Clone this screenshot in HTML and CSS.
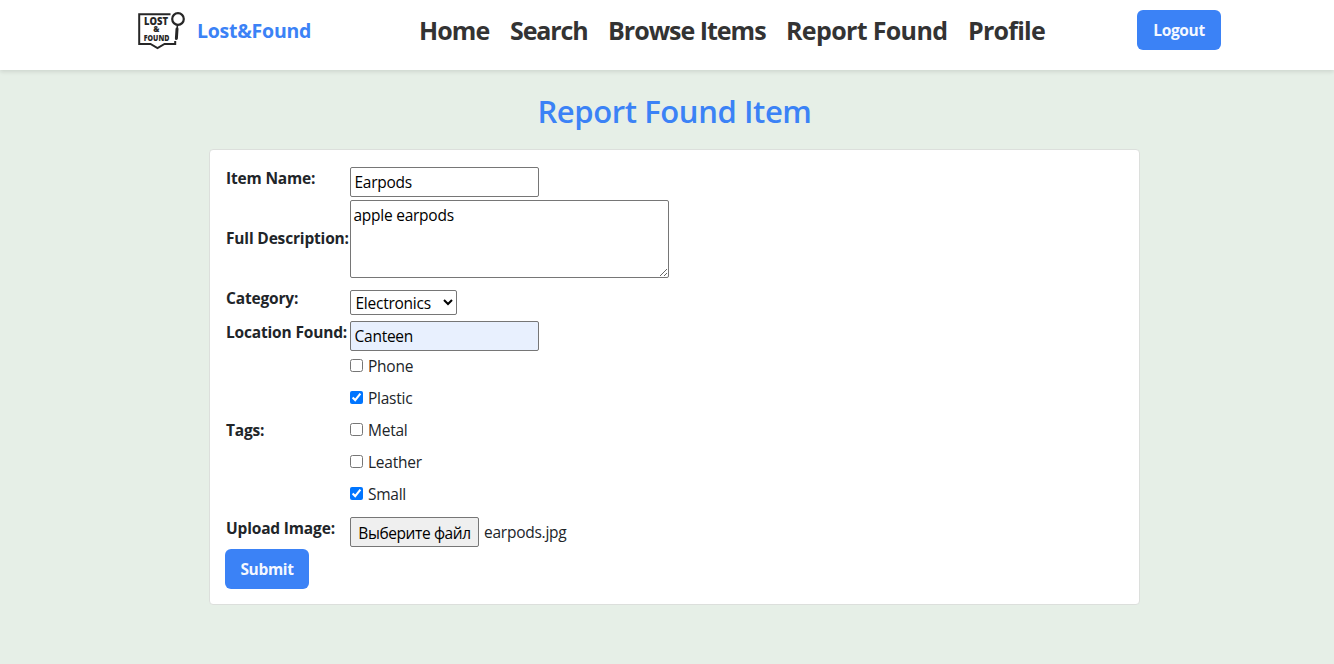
FILE: index.html
```
<!DOCTYPE html>
<html lang="en">
<head>
<meta charset="utf-8">
<title>Report Found Item</title>
<link rel="stylesheet" href="styles.css">
</head>
<body>
<header class="header">
  <a class="brand">
    <svg class="logo" width="50" height="40" viewBox="0 0 50 40" fill="none" stroke="#272727">
      <path d="M33.5 4.2H2.2V34H13.5L20.5 38L27.5 34H38.2V31" stroke-width="2"/>
      <circle cx="41" cy="9" r="5.8" stroke-width="2.2"/>
      <path d="M40.3 15V19" stroke-width="1.6"/>
      <path d="M40 19L39.4 28.5" stroke-width="3" stroke-linecap="round"/>
      <g class="logo-text" fill="#272727" stroke="none">
        <text x="7" y="14.6" font-size="10.2" textLength="24" lengthAdjust="spacingAndGlyphs">LOST</text>
        <text x="16.3" y="22.4" font-size="8.2" textLength="6.2" lengthAdjust="spacingAndGlyphs">&amp;</text>
        <text x="6.8" y="30.6" font-size="8.8" textLength="25.5" lengthAdjust="spacingAndGlyphs">FOUND</text>
      </g>
    </svg>
    <span class="brand-name">Lost&amp;Found</span>
  </a>
  <nav class="nav">
    <a class="nav-home">Home</a>
    <a class="nav-search">Search</a>
    <a class="nav-browse">Browse Items</a>
    <a class="nav-report">Report Found</a>
    <a class="nav-profile">Profile</a>
  </nav>
  <button class="btn logout">Logout</button>
</header>
<main class="page">
  <h1 class="title"><span>Report Found Item</span></h1>
  <form class="card">
    <div class="row row-name">
      <label>Item Name:</label>
      <input class="field" type="text" value="Earpods">
    </div>
    <div class="row row-desc">
      <label>Full Description:</label>
      <textarea class="area">apple earpods</textarea>
    </div>
    <div class="row row-category">
      <label>Category:</label>
      <select class="select"><option>Electronics</option></select>
    </div>
    <div class="row row-location">
      <label>Location Found:</label>
      <input class="field autofilled" type="text" value="Canteen">
    </div>
    <div class="row row-tags">
      <label>Tags:</label>
      <div class="tags">
        <div class="tag"><input type="checkbox"><span>Phone</span></div>
        <div class="tag"><input type="checkbox" checked><span>Plastic</span></div>
        <div class="tag"><input type="checkbox"><span>Metal</span></div>
        <div class="tag"><input type="checkbox"><span>Leather</span></div>
        <div class="tag"><input type="checkbox" checked><span>Small</span></div>
      </div>
    </div>
    <div class="row row-upload">
      <label>Upload Image:</label>
      <div class="upload"><button type="button" class="file-btn">Выберите файл</button><span>earpods.jpg</span></div>
    </div>
    <button type="button" class="btn submit">Submit</button>
  </form>
</main>
</body>
</html>
```
FILE: styles.css
```
* { box-sizing: border-box; }
body {
  margin: 0;
  background: #e6efe7;
  color: #212529;
  font: 15.5px/24px "Open Sans", "Noto Sans", sans-serif;
  letter-spacing: -0.25px;
  height: 664px;
  overflow: hidden;
}
input, textarea, select, button {
  font: inherit;
  letter-spacing: inherit;
  margin: 0;
  color: #000;
}
.header {
  display: flex;
  align-items: flex-start;
  height: 70px;
  padding: 10px 113px 0 137px;
  background: #fff;
  box-shadow: 0 2px 4px rgba(0, 0, 0, 0.1);
}
.brand { display: flex; width: 282px; height: 40px; }
.logo-text { font-family: "Open Sans", sans-serif; font-weight: 800; letter-spacing: 0; }
.brand-name {
  margin-left: 10px;
  color: #3b82f6;
  font-size: 19.5px;
  font-weight: 700;
  line-height: 41px;
  letter-spacing: -0.25px;
}
.nav {
  display: flex;
  flex: 1;
  color: #333;
  font-size: 25px;
  font-weight: 700;
  line-height: 41px;
  letter-spacing: -0.75px;
  white-space: nowrap;
}
.nav-home { width: 91px; letter-spacing: -0.9px; }
.nav-search { width: 98px; letter-spacing: -1.1px; }
.nav-browse { width: 178px; letter-spacing: -1px; }
.nav-report { width: 182px; letter-spacing: -0.65px; }
.btn {
  width: 84px;
  height: 40px;
  padding: 0;
  border: 0;
  border-radius: 6px;
  background: #3b82f6;
  color: #f4f8ff;
  font-weight: 700;
  letter-spacing: -0.35px;
  line-height: 41px;
}
.page { width: 931px; margin-left: 209px; padding-top: 22px; }
.title {
  margin: 0 0 19px;
  color: #3b82f6;
  font-size: 31px;
  font-weight: 600;
  line-height: 38px;
  letter-spacing: -0.4px;
  text-align: center;
}
.card {
  height: 456px;
  padding: 16px;
  border: 1px solid #dcdfdc;
  border-radius: 4px;
  background: #fff;
}
.row { display: grid; grid-template-columns: 124px 1fr; align-items: start; justify-items: start; }
.row label { font-weight: 700; letter-spacing: -0.17px; white-space: nowrap; }
.row-name { height: 33px; padding-top: 1px; }
.row-name label, .row-category label, .row-location label, .row-upload label { margin-top: -1px; }
.row-desc { height: 87px; padding-top: 1px; }
.row-desc label { padding-top: 26px; }
.row-category { height: 34px; padding-top: 1px; }
.row-category .select { margin-top: 3px; }
.row-location { height: 34px; padding-top: 1px; }
.row-tags { height: 160px; }
.row-tags label { padding-top: 64px; }
.row-upload { height: 35px; padding-top: 3px; }
.field {
  width: 189px;
  height: 30px;
  padding: 1px 3.5px;
  border: 1px solid #767676;
  border-radius: 2px;
}
.autofilled { background: #e8f0fe; }
.area {
  width: 319px;
  height: 78px;
  padding: 2px 2.5px;
  border: 1px solid #767676;
  border-radius: 2px;
  resize: both;
}
.select {
  width: 107px;
  height: 25px;
  padding: 0 0 0 0.5px;
  border: 1px solid #767676;
  border-radius: 2px;
  background: #fff;
  line-height: 23px;
}
.tags { display: grid; gap: 8px; }
.tag { display: flex; gap: 5px; height: 24px; line-height: 25px; }
.tag input { width: 13px; height: 13px; margin-top: 5px; }
.upload { display: flex; gap: 5px; line-height: 30px; }
.file-btn {
  width: 129px;
  height: 30px;
  padding: 0;
  border: 1px solid #767676;
  border-radius: 2px;
  background: #efefef;
  letter-spacing: -0.4px;
  white-space: nowrap;
}
.submit { display: block; margin-left: -1px; }
```
